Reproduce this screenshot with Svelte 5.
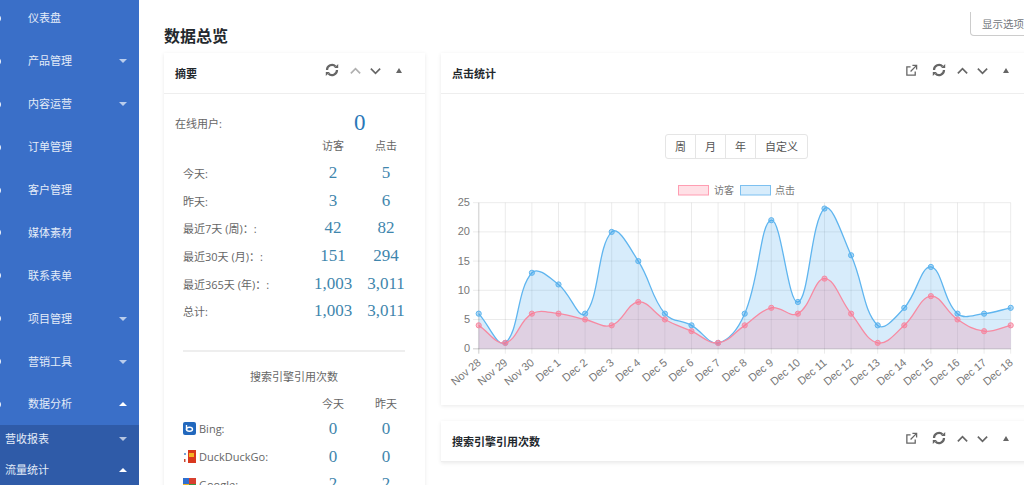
<script lang="ts">
const menu = [
  { label: '仪表盘' },
  { label: '产品管理', caret: 'down' },
  { label: '内容运营', caret: 'down' },
  { label: '订单管理' },
  { label: '客户管理' },
  { label: '媒体素材' },
  { label: '联系表单' },
  { label: '项目管理', caret: 'down' },
  { label: '营销工具', caret: 'down' },
  { label: '数据分析', caret: 'up' }
];
const subMenu = [
  { label: '营收报表', caret: 'down' },
  { label: '流量统计', caret: 'up' }
];
const stats = [
  ['今天:', '2', '5'],
  ['昨天:', '3', '6'],
  ['最近7天 (周)：:', '42', '82'],
  ['最近30天 (月)：:', '151', '294'],
  ['最近365天 (年)：:', '1,003', '3,011'],
  ['总计:', '1,003', '3,011']
];
const ranges = ['周', '月', '年', '自定义'];

const labels = ['Nov 28', 'Nov 29', 'Nov 30', 'Dec 1', 'Dec 2', 'Dec 3', 'Dec 4', 'Dec 5', 'Dec 6', 'Dec 7', 'Dec 8', 'Dec 9', 'Dec 10', 'Dec 11', 'Dec 12', 'Dec 13', 'Dec 14', 'Dec 15', 'Dec 16', 'Dec 17', 'Dec 18'];
const visitors = [4, 1, 6, 6, 5, 4, 8, 5, 3, 1, 4, 7, 6, 12, 6, 1, 4, 9, 5, 3, 4];
const clicks = [6, 1, 13, 11, 6, 20, 15, 6, 4, 1, 6, 22, 8, 24, 16, 4, 7, 14, 6, 6, 7];

const x0 = 478.7, xStep = 26.6, y0 = 348.7, yUnit = 5.84;
const px = (i: number) => x0 + i * xStep;
const py = (v: number) => y0 - v * yUnit;
const yTicks = [0, 5, 10, 15, 20, 25];

// same spline as chart.js, tension 0.4
function linePath(data: number[]) {
  const pts = data.map((v, i) => [px(i), py(v)]);
  const ctrl = pts.map((p, i) => {
    const a = pts[i - 1] || p;
    const b = pts[i + 1] || p;
    const d1 = Math.hypot(p[0] - a[0], p[1] - a[1]);
    const d2 = Math.hypot(b[0] - p[0], b[1] - p[1]);
    const s = d1 + d2;
    const fa = (0.4 * d1) / s;
    const fb = (0.4 * d2) / s;
    return {
      prev: [p[0] - fa * (b[0] - a[0]), Math.min(y0, p[1] - fa * (b[1] - a[1]))],
      next: [p[0] + fb * (b[0] - a[0]), Math.min(y0, p[1] + fb * (b[1] - a[1]))]
    };
  });
  let d = `M${pts[0][0]} ${pts[0][1]}`;
  for (let i = 1; i < pts.length; i++) {
    d += ` C${ctrl[i - 1].next[0]} ${ctrl[i - 1].next[1]} ${ctrl[i].prev[0]} ${ctrl[i].prev[1]} ${pts[i][0]} ${pts[i][1]}`;
  }
  return d;
}
const areaPath = (data: number[]) => `${linePath(data)} L${px(data.length - 1)} ${y0} L${px(0)} ${y0} Z`;
</script>

{#snippet tools(external: boolean, dimUp: boolean)}
  <div class="tools">
    {#if external}
      <svg class="ic ext" viewBox="0 0 14 14"><path d="M6 3H2v9h9V8" /><path d="M6 8l6-6M8 1.5h4.5V6" /></svg>
    {/if}
    <svg class="ic sync" viewBox="0 0 14 14"><path d="M2 7a5 5 0 0 1 8.6-3.5" /><path d="M12 7a5 5 0 0 1-8.6 3.5" /><path class="solid" d="M9.2 5h4V1zM4.8 9h-4v4z" /></svg>
    <svg class="ic chev" class:dim={dimUp} viewBox="0 0 14 14"><path d="M2 10l5-5 5 5" /></svg>
    <svg class="ic chev" viewBox="0 0 14 14"><path d="M2 5l5 5 5-5" /></svg>
    <span class="tri"></span>
  </div>
{/snippet}

<div class="page">
  <nav class="sidebar">
    {#each menu as item}
      <div class="nav-item">
        <span class="dot"></span>
        <span class="nav-label">{item.label}</span>
        {#if item.caret}<span class="caret {item.caret}"></span>{/if}
      </div>
    {/each}
    <div class="sub">
      {#each subMenu as item}
        <div class="sub-item">
          <span class="nav-label">{item.label}</span>
          <span class="caret {item.caret}"></span>
        </div>
      {/each}
    </div>
  </nav>

  <main class="main">
    <div class="top">
      <h1>数据总览</h1>
      <div class="options">显示选项</div>
    </div>
    <div class="columns">
      <section class="card summary">
        <header class="card-head"><h2>摘要</h2>{@render tools(false, true)}</header>
        <div class="summary-body">
          <div class="online">
            <span>在线用户:</span>
            <b class="big">0</b>
          </div>
          <div class="row head"><span></span><span>访客</span><span>点击</span></div>
          {#each stats as s}
            <div class="row"><span>{s[0]}</span><b>{s[1]}</b><b>{s[2]}</b></div>
          {/each}
          <hr />
          <div class="sub-title">搜索引擎引用次数</div>
          <div class="row head two"><span></span><span>今天</span><span>昨天</span></div>
          <div class="row">
            <span class="eng">
              <svg class="logo" viewBox="0 0 13 13"><rect width="13" height="13" rx="2" fill="#2268bd" /><path d="M3.5 3v5" stroke="#fff" stroke-width="1.4" /><ellipse cx="6.5" cy="7.2" rx="3" ry="2" fill="none" stroke="#fff" stroke-width="1.4" /></svg>
              Bing:
            </span><b>0</b><b>0</b>
          </div>
          <div class="row">
            <span class="eng">
              <svg class="logo" viewBox="0 0 13 13"><rect x="5" width="8" height="13" fill="#d9381e" /><rect x="6" y="3" width="5" height="4" fill="#f5b325" /><rect x="1" y="3" width="2" height="2" fill="#7aa6d8" /><rect x="1" y="9" width="1.5" height="3" fill="#c9452e" /></svg>
              DuckDuckGo:
            </span><b>0</b><b>0</b>
          </div>
          <div class="row">
            <span class="eng">
              <svg class="logo" viewBox="0 0 13 13"><rect width="6" height="6" fill="#2f6fd0" /><rect x="6" width="7" height="6" fill="#d8402f" /><rect y="6" width="6" height="7" fill="#f0b429" /><rect x="6" y="6" width="7" height="7" fill="#3a9a45" /></svg>
              Google:
            </span><b>2</b><b>2</b>
          </div>
        </div>
      </section>

      <div class="right">
        <section class="card">
          <header class="card-head"><h2>点击统计</h2>{@render tools(true, false)}</header>
          <div class="chart-body">
            <div class="ranges">
              {#each ranges as r}<span>{r}</span>{/each}
            </div>
            <svg class="chart" viewBox="441 175 591 225">
              <rect x="678.5" y="185.5" width="30" height="9.5" fill="rgba(255,99,132,.2)" stroke="#ff9db2" />
              <text x="714" y="194" class="legend">访客</text>
              <rect x="740.5" y="185.5" width="30" height="9.5" fill="rgba(54,162,235,.2)" stroke="#7cc0f0" />
              <text x="775" y="194" class="legend">点击</text>

              {#each yTicks as t}
                <line x1="473" x2={px(20)} y1={py(t)} y2={py(t)} class="grid" class:zero={t === 0} />
                <text x="470" y={py(t) + 3.5} class="tick" text-anchor="end">{t}</text>
              {/each}
              {#each labels as l, i}
                <line x1={px(i)} x2={px(i)} y1={py(25)} y2={y0 + 5} class="grid" class:zero={i === 0} />
                <text class="tick" text-anchor="end" transform="translate({px(i) + 3} {y0 + 15}) rotate(-40)">{l}</text>
              {/each}

              <path d={areaPath(clicks)} fill="rgba(54,162,235,.2)" />
              <path d={linePath(clicks)} fill="none" stroke="#5fb5ef" stroke-width="1.3" />
              {#each clicks as v, i}
                <circle cx={px(i)} cy={py(v)} r="2.6" fill="rgba(54,162,235,.4)" stroke="#5fb5ef" />
              {/each}
              <path d={areaPath(visitors)} fill="rgba(255,99,132,.2)" />
              <path d={linePath(visitors)} fill="none" stroke="#f78aa2" stroke-width="1.3" />
              {#each visitors as v, i}
                <circle cx={px(i)} cy={py(v)} r="2.6" fill="rgba(255,99,132,.4)" stroke="#f78aa2" />
              {/each}
            </svg>
          </div>
        </section>
        <section class="card">
          <header class="card-head"><h2>搜索引擎引用次数</h2>{@render tools(true, false)}</header>
        </section>
      </div>
    </div>
  </main>
</div>

<style>
  :global(body) {
    margin: 0;
    background: #fff;
  }

  .page {
    display: flex;
    width: 1024px;
    height: 485px;
    overflow: hidden;
    font-family: "Open Sans", "Noto Sans CJK SC", sans-serif;
    font-size: 11px;
    color: #666;
  }

  .sidebar {
    flex: 0 0 139px;
    box-sizing: border-box;
    padding-top: 1px;
    background: #3a6fc8;
    color: #e4ecf8;
    overflow: hidden;
  }

  .nav-item {
    display: flex;
    align-items: center;
    height: 42.9px;
    margin-top: -4px;
    margin-bottom: 4px;
    padding-right: 12px;
  }

  .dot {
    width: 9px;
    height: 9px;
    margin-left: -8px;
    margin-right: 27px;
    border-radius: 50%;
    background: #eaf0fa;
  }

  .nav-label {
    flex: 1;
    line-height: 16px;
  }

  .caret {
    width: 0;
    height: 0;
    border-left: 4px solid transparent;
    border-right: 4px solid transparent;
  }

  .caret.down {
    border-top: 4px solid rgba(255, 255, 255, 0.65);
  }

  .caret.up {
    border-bottom: 4px solid #fff;
  }

  .sub {
    margin-top: -5px;
    height: 61px;
    background: #2f5ba8;
  }

  .sub-item {
    display: flex;
    align-items: center;
    box-sizing: border-box;
    height: 31px;
    padding: 0 12px 3px 5px;
  }

  .main {
    flex: 1;
    min-width: 0;
    padding-left: 25px;
    overflow: hidden;
  }

  .top {
    display: flex;
    justify-content: space-between;
    height: 53px;
  }

  h1 {
    margin: 26px 0 0;
    font-size: 16px;
    line-height: 20px;
    font-weight: 700;
    color: #23282d;
  }

  .options {
    box-sizing: border-box;
    width: 64px;
    height: 24px;
    margin: 12px -10px 0 0;
    padding-left: 11px;
    border: 1px solid #ccc;
    border-top: 0;
    border-radius: 0 0 0 4px;
    font-size: 10.5px;
    line-height: 25px;
    color: #72777c;
    white-space: nowrap;
  }

  .columns {
    display: flex;
    gap: 16px;
    align-items: flex-start;
  }

  .card {
    background: #fff;
    box-shadow: 0 1px 4px rgba(0, 0, 0, 0.09);
  }

  .summary {
    flex: 0 0 261px;
    min-width: 0;
  }

  .right {
    flex: 0 0 591px;
    display: flex;
    flex-direction: column;
    gap: 16px;
  }

  .card-head {
    display: flex;
    justify-content: space-between;
    align-items: center;
    box-sizing: border-box;
    height: 41px;
    padding: 0 0 0 11px;
    border-bottom: 1px solid #eee;
  }

  h2 {
    margin: 0;
    font-size: 11px;
    font-weight: 700;
    color: #23282d;
  }

  .tools {
    display: flex;
    align-items: center;
    margin-top: -6px;
    padding-right: 23px;
  }

  .ic {
    width: 13px;
    height: 13px;
    fill: none;
    stroke: #666;
    stroke-width: 1.8;
    margin-left: 7px;
  }

  .ic.ext {
    stroke-width: 1.4;
    margin-right: 7px;
  }

  .ic.sync {
    width: 14px;
    height: 14px;
    stroke-width: 2.2;
    margin-right: 3px;
  }

  .ic .solid {
    fill: #666;
    stroke: none;
  }

  .ic.dim {
    stroke: #b0b0b0;
  }

  .tri {
    width: 0;
    height: 0;
    margin-left: 14px;
    border-left: 3.5px solid transparent;
    border-right: 3.5px solid transparent;
    border-bottom: 5px solid #666;
  }

  .summary-body {
    padding: 16px 0 0 19px;
    height: 400px;
  }

  .online {
    display: grid;
    grid-template-columns: 168px 1fr;
    margin-left: -8px;
    height: 25px;
    align-items: center;
  }

  .big {
    justify-self: start;
    font-size: 23px;
    font-family: "Liberation Serif", serif;
    font-weight: 400;
    color: #2a78b8;
    margin-left: 11px;
  }

  .row {
    display: grid;
    grid-template-columns: 123.5px 53px 53px;
    align-items: center;
    height: 27.7px;
    white-space: nowrap;
  }

  .row > :nth-child(n + 2) {
    text-align: center;
  }

  .row.head {
    height: 20px;
  }

  .row.head + .row {
    margin-top: 4px;
  }

  .row.head.two + .row {
    margin-top: 2px;
  }

  .row b {
    font-family: "Liberation Serif", serif;
    font-size: 17px;
    font-weight: 400;
    color: #3f86ad;
  }

  hr {
    width: 222px;
    height: 2px;
    margin: 25px 0 0;
    border: 0;
    background: #eee;
  }

  .sub-title {
    width: 222px;
    margin-top: 16px;
    text-align: center;
    line-height: 18px;
  }

  .row.head.two {
    margin-top: 7px;
  }

  .eng {
    display: flex;
    align-items: center;
    gap: 3px;
  }

  .logo {
    width: 13px;
    height: 13px;
    flex: none;
  }

  .chart-body {
    height: 311px;
    padding-top: 40px;
    box-sizing: border-box;
  }

  .ranges {
    display: flex;
    justify-content: center;
    box-sizing: border-box;
    width: max-content;
    margin: 0 auto;
    border: 1px solid #e5e5e5;
    border-radius: 3px;
    height: 25px;
  }

  .ranges span {
    padding: 0 9px;
    line-height: 23px;
    font-size: 11px;
    color: #555;
    border-left: 1px solid #e5e5e5;
  }

  .ranges span:first-child {
    border-left: 0;
  }

  .chart {
    display: block;
    width: 591px;
    height: 225px;
    margin-top: 16px;
  }

  .legend {
    font-size: 10px;
    fill: #777;
    font-family: "Open Sans", "Noto Sans CJK SC", sans-serif;
  }

  .tick {
    font-size: 11px;
    fill: #777;
    font-family: "Liberation Sans", sans-serif;
  }

  .grid {
    stroke: rgba(0, 0, 0, 0.08);
    stroke-width: 1;
  }

  .grid.zero {
    stroke: rgba(0, 0, 0, 0.14);
    stroke-width: 1.5;
  }
</style>
